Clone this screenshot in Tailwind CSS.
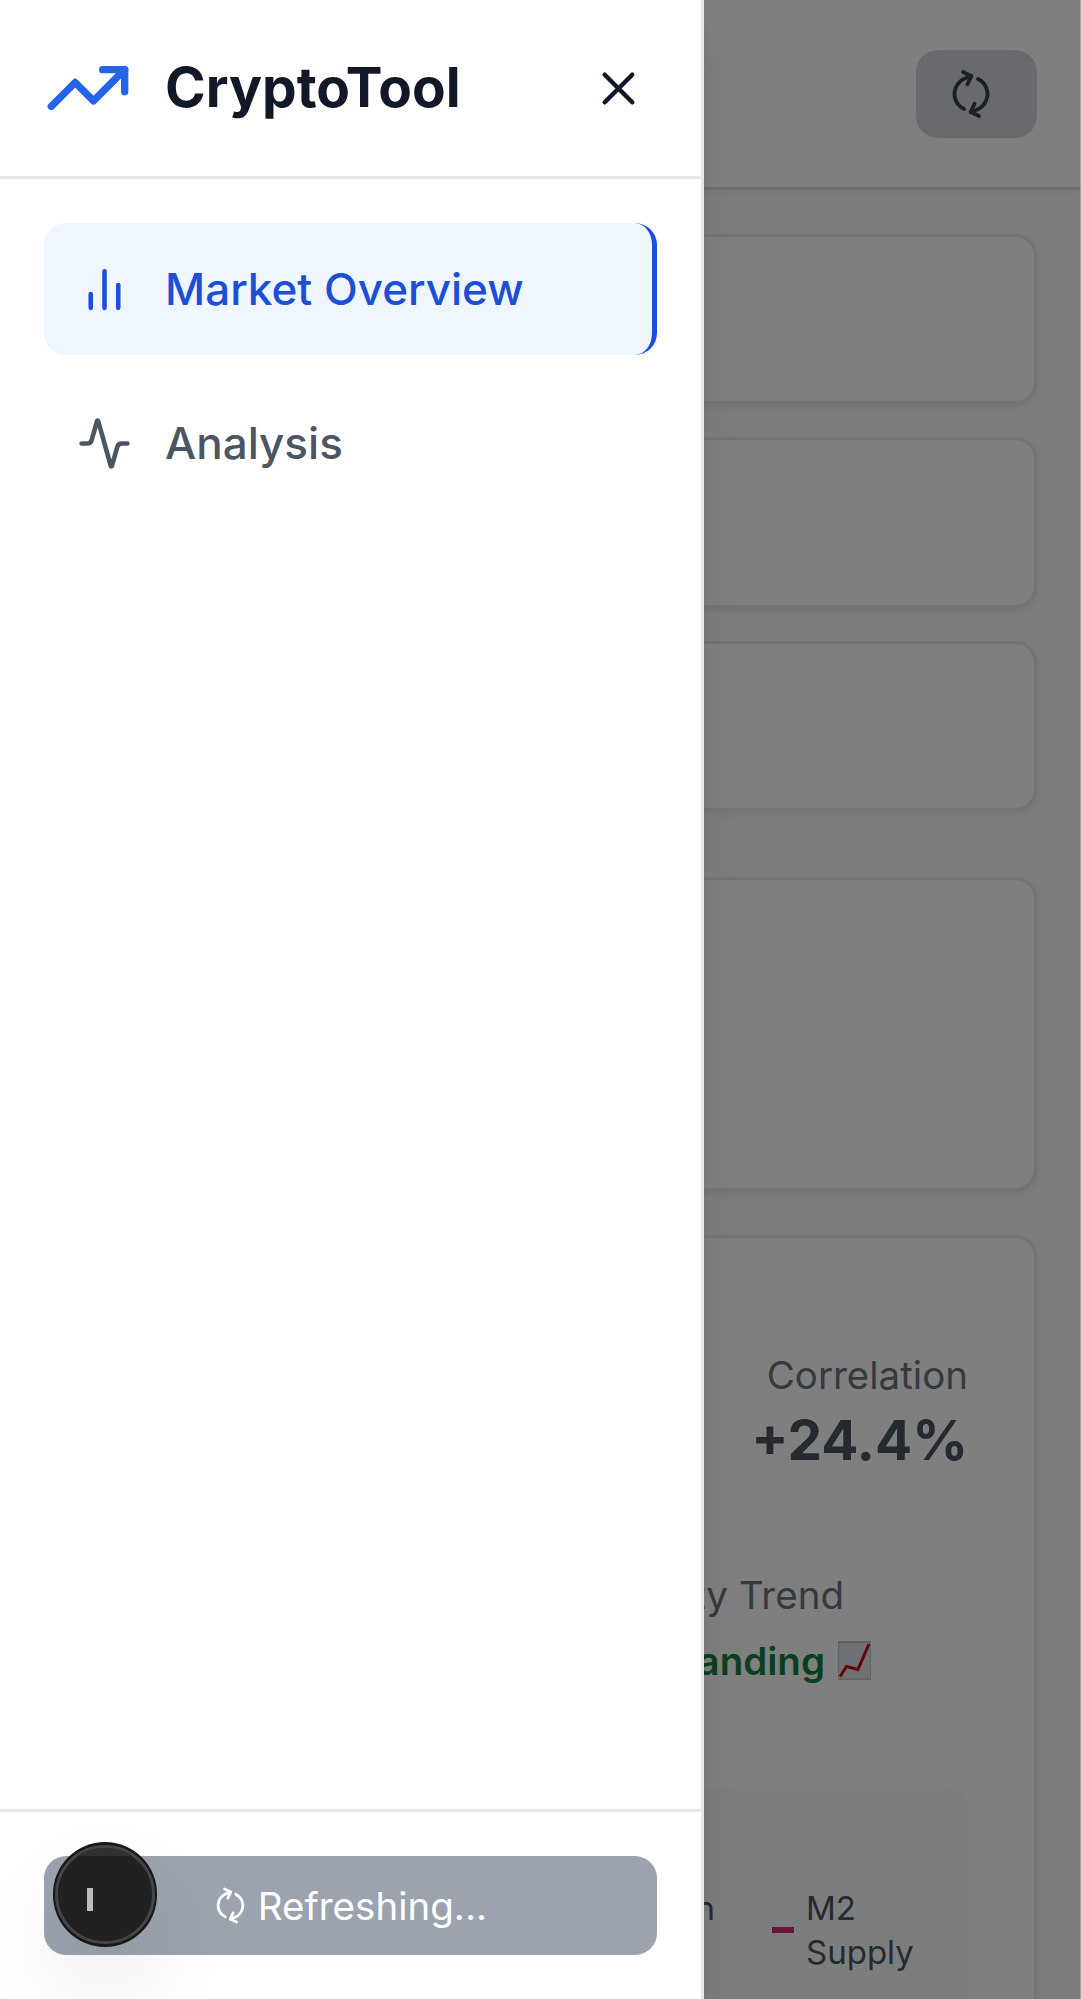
<!DOCTYPE html>
<html lang="en">
<head>
<meta charset="utf-8">
<title>CryptoTool</title>
<script src="https://cdn.jsdelivr.net/npm/@tailwindcss/browser@4"></script>
</head>
<body class="relative h-[1999px] w-[1081px] overflow-hidden bg-[#f9fafb] font-['Inter',sans-serif] text-[#111827]">

<!-- Page behind the drawer -->
<div class="flex h-[1999px] flex-col overflow-hidden">
  <header class="relative flex h-[187px] shrink-0 items-center justify-end bg-white px-[44px] shadow-[0_3px_6px_rgba(0,0,0,0.1),0_2px_3px_rgba(0,0,0,0.06)]">
    <button class="flex h-[88px] w-[121px] items-center rounded-[22px] bg-[#d1d5db] pl-[33px] text-[#374151]">
      <svg class="size-[44px] rotate-[-65deg]" viewBox="0 0 24 24" fill="none" stroke="currentColor" stroke-width="2.100" stroke-linecap="round" stroke-linejoin="round"><path d="M3 12a9 9 0 0 1 9-9 9.75 9.75 0 0 1 6.74 2.74L21 8"/><path d="M21 3v5h-5"/><path d="M21 12a9 9 0 0 1-9 9 9.75 9.75 0 0 1-6.74-2.74L3 16"/><path d="M8 16H3v5"/></svg>
    </button>
  </header>
  <main class="flex flex-col px-[44px] pt-[46.500px]">
    <section class="flex flex-col gap-[33px]">
      <div class="h-[170.5px] rounded-[22px] border-3 border-[#e7e9ed] bg-white shadow-[0_3px_6px_rgba(0,0,0,0.08)]"></div>
      <div class="h-[170.5px] rounded-[22px] border-3 border-[#e7e9ed] bg-white shadow-[0_3px_6px_rgba(0,0,0,0.08)]"></div>
      <div class="h-[170.5px] rounded-[22px] border-3 border-[#e7e9ed] bg-white shadow-[0_3px_6px_rgba(0,0,0,0.08)]"></div>
    </section>
    <div class="mt-[66px] h-[313.5px] rounded-[22px] border-3 border-[#e7e9ed] bg-white shadow-[0_3px_6px_rgba(0,0,0,0.08)]"></div>
    <section class="mt-[44px] h-[900px] rounded-[22px] border-3 border-[#e7e9ed] bg-white px-[66px] pt-[110.500px] shadow-[0_3px_6px_rgba(0,0,0,0.08)]">
      <div class="flex flex-col items-end">
        <span class="text-[38.5px] leading-[55px] text-[#6b7280]">Correlation</span>
        <span class="text-[55px] leading-[75px] font-bold text-[#4b5563]">+24.4%</span>
      </div>
      <div class="mt-[90px] pr-[97px]">
        <div class="flex flex-col items-end">
          <span class="pr-[27px] text-[38.5px] leading-[55px] text-[#6b7280]">Liquidity Trend</span>
          <span class="mt-[11px] flex items-center gap-[13px] text-[38.5px] leading-[55px] font-semibold text-[#15803d]">Expanding
            <svg class="-mt-[2px] h-[39px] w-[33px]" viewBox="0 0 33 39"><rect width="33" height="39" fill="#bfc6cc"/><rect x="1" y="2" width="31" height="35.500" fill="#dde3e8"/><path d="M2 35.500 8.500 25.500 20 28.500 31 3" fill="none" stroke="#c8000a" stroke-width="3"/></svg>
          </span>
        </div>
      </div>
      <div class="mt-[98px] flex h-[300px] justify-end rounded-[22px] bg-[#f9fafb] pt-[99px] pr-[44px] text-[33px] leading-[44px] text-[#4b5563]">
        <span>Bitcoin</span>
        <div class="ml-[57px] flex h-[88px] w-[152px] items-center gap-[12px]">
          <span class="h-[5.5px] w-[22px] shrink-0 bg-[#db2777]"></span><span>M2 Supply</span>
        </div>
      </div>
    </section>
  </main>
</div>

<div class="absolute inset-0 bg-black/50"></div>

<!-- Navigation drawer -->
<aside class="absolute inset-y-0 left-0 flex w-[704px] flex-col border-r-3 border-[#e5e7eb] bg-white shadow-[0_28px_41px_-8px_rgba(0,0,0,0.1),0_11px_16px_-11px_rgba(0,0,0,0.1)]">
  <div class="flex h-[179px] shrink-0 items-center border-b-3 border-[#e5e7eb] px-[44px]">
    <svg class="size-[88px] text-[#2563eb]" viewBox="0 0 24 24" fill="none" stroke="currentColor" stroke-width="2" stroke-linecap="round" stroke-linejoin="round"><path d="M22 7l-8.500 8.500-5-5L2 17"/><path d="M16 7h6v6"/></svg>
    <h1 class="mb-[2px] ml-[33px] text-[55px] leading-[77px] font-bold">CryptoTool</h1>
    <button class="ml-auto p-[11px]"><svg class="size-[55px]" viewBox="0 0 24 24" fill="none" stroke="currentColor" stroke-width="2" stroke-linecap="round" stroke-linejoin="round"><path d="M18 6 6 18M6 6l12 12"/></svg></button>
  </div>
  <nav class="flex flex-1 flex-col gap-[22px] p-[44px] text-[44px] leading-[66px] font-medium">
    <a class="flex h-[132px] items-center gap-[33px] rounded-[22px] border-r-[5.5px] border-[#1d4ed8] bg-[#eff6ff] px-[33px] text-[#1d4ed8]">
      <svg class="size-[55px]" viewBox="0 0 24 24" fill="none" stroke="currentColor" stroke-width="2" stroke-linecap="round" stroke-linejoin="round"><path d="M18 20V10M12 20V4M6 20v-6"/></svg>
      <span>Market Overview</span>
    </a>
    <a class="flex h-[132px] items-center gap-[33px] rounded-[22px] px-[33px] text-[#4b5563]">
      <svg class="size-[55px]" viewBox="0 0 24 24" fill="none" stroke="currentColor" stroke-width="2" stroke-linecap="round" stroke-linejoin="round"><path d="M22 12h-2.480a2 2 0 0 0-1.930 1.460l-2.350 8.360a.25.25 0 0 1-.48 0L9.240 2.180a.25.25 0 0 0-.48 0l-2.350 8.360A2 2 0 0 1 4.490 12H2"/></svg>
      <span>Analysis</span>
    </a>
  </nav>
  <div class="shrink-0 border-t-3 border-[#e5e7eb] p-[44px]">
    <button class="flex h-[99px] w-full items-center justify-center gap-[11px] rounded-[22px] bg-[#9ca3af] text-[38.5px] leading-[55px] text-white">
      <svg class="size-[33px] rotate-[-65deg]" viewBox="0 0 24 24" fill="none" stroke="currentColor" stroke-width="2" stroke-linecap="round" stroke-linejoin="round"><path d="M3 12a9 9 0 0 1 9-9 9.750 9.750 0 0 1 6.740 2.740L21 8"/><path d="M21 3v5h-5"/><path d="M21 12a9 9 0 0 1-9 9 9.750 9.750 0 0 1-6.740-2.740L3 16"/><path d="M8 16H3v5"/></svg>
      <span class="pt-[2px]">Refreshing...</span>
    </button>
  </div>
</aside>

<!-- Floating developer badge -->
<div class="absolute top-[1842px] left-[52.500px] size-[104.500px] rounded-full bg-[#171717] p-[2.500px] shadow-[0_44px_88px_rgba(0,0,0,0.08)]">
  <div class="relative size-full overflow-hidden rounded-full border-3 border-[#454546] bg-[#202123]">
    <div class="absolute inset-x-0 top-0 h-[8px] bg-[#313131]"></div>
    <div class="absolute top-[40px] left-[29px] h-[23px] w-[6px] bg-[#bdbdbd]"></div>
  </div>
</div>
<div class="absolute inset-y-0 right-0 w-px bg-white/30"></div>
</body>
</html>
